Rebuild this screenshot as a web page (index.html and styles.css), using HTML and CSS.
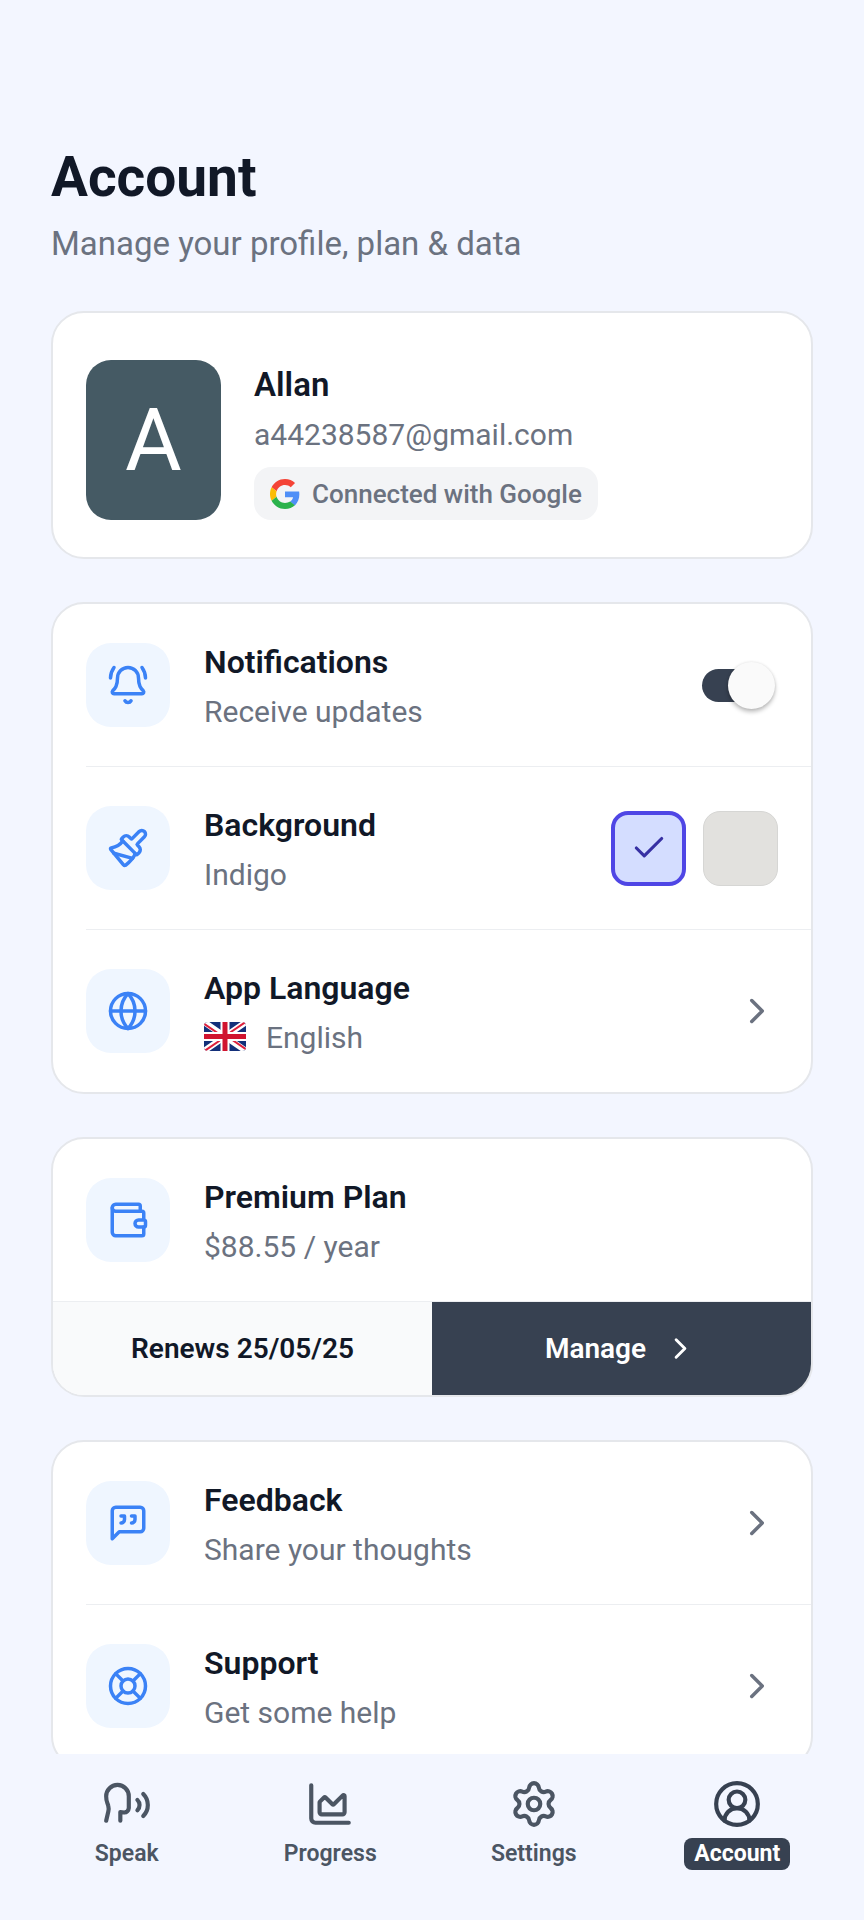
FILE: index.html
```html
<!DOCTYPE html>
<html lang="en">
<head>
<meta charset="utf-8">
<meta name="viewport" content="width=device-width, initial-scale=1">
<title>Account</title>
<link rel="stylesheet" href="styles.css">
</head>
<body>
<main class="screen">
  <header class="header">
    <h1 class="title">Account</h1>
    <p class="subtitle">Manage your profile, plan &amp; data</p>
  </header>

  <section class="card profile">
    <div class="avatar">A</div>
    <div class="profile-info">
      <h2 class="profile-name">Allan</h2>
      <p class="profile-email">a44238587@gmail.com</p>
      <p class="provider">
        <svg class="provider-logo" viewBox="0 0 48 48" aria-hidden="true">
          <path fill="#f44336" d="M24 9.5c3.54 0 6.71 1.22 9.21 3.6l6.85-6.85C35.9 2.38 30.47 0 24 0 14.62 0 6.51 5.38 2.56 13.22l7.98 6.19C12.43 13.72 17.74 9.5 24 9.5z"/>
          <path fill="#4f8ff7" d="M46.98 24.55c0-1.57-.15-3.09-.38-4.55H24v9.02h12.94c-.58 2.96-2.26 5.48-4.78 7.18l7.73 6c4.51-4.18 7.09-10.36 7.09-17.65z"/>
          <path fill="#fbbc05" d="M10.53 28.59c-.48-1.45-.76-2.99-.76-4.59s.27-3.14.76-4.59l-7.98-6.19C.92 16.46 0 20.12 0 24s.92 7.54 2.56 10.78l7.97-6.19z"/>
          <path fill="#2bb24c" d="M24 48c6.48 0 11.93-2.13 15.89-5.81l-7.73-6c-2.15 1.45-4.92 2.3-8.16 2.3-6.26 0-11.57-4.22-13.47-9.91l-7.98 6.19C6.51 42.62 14.62 48 24 48z"/>
        </svg>
        Connected with Google
      </p>
    </div>
  </section>

  <section class="card">
    <label class="row">
      <span class="tile">
        <svg class="icon" viewBox="0 0 24 24" aria-hidden="true"><path d="M10.268 21a2 2 0 0 0 3.464 0"/><path d="M22 8c0-2.3-.8-4.3-2-6"/><path d="M3.262 15.326A1 1 0 0 0 4 17h16a1 1 0 0 0 .74-1.673C19.41 13.956 18 12.499 18 8A6 6 0 0 0 6 8c0 4.499-1.411 5.956-2.738 7.326"/><path d="M4 2C2.8 3.7 2 5.7 2 8"/></svg>
      </span>
      <span class="row-text">
        <span class="row-title">Notifications</span>
        <span class="row-sub">Receive updates</span>
      </span>
      <input class="switch" type="checkbox" role="switch" checked>
    </label>
    <div class="row" role="radiogroup" aria-labelledby="bg-title">
      <span class="tile">
        <svg class="icon" viewBox="0 0 24 24" aria-hidden="true"><path d="m14.622 17.897-10.68-2.913"/><path d="M18.376 2.622a1 1 0 1 1 3.002 3.002L17.36 9.643a.5.5 0 0 0 0 .707l.944.944a2.41 2.41 0 0 1 0 3.408l-.944.944a.5.5 0 0 1-.707 0L8.354 7.348a.5.5 0 0 1 0-.707l.944-.944a2.41 2.41 0 0 1 3.408 0l.944.944a.5.5 0 0 0 .707 0z"/><path d="M9 8c-1.804 2.71-3.97 3.46-6.583 3.948a.507.507 0 0 0-.302.819l7.32 8.883a1 1 0 0 0 1.185.204C12.735 20.405 16 16.792 16 15"/></svg>
      </span>
      <span class="row-text">
        <span class="row-title" id="bg-title">Background</span>
        <span class="row-sub">Indigo</span>
      </span>
      <span class="swatches">
        <label class="swatch">
          <input class="swatch-input indigo" type="radio" name="background" aria-label="Indigo" checked>
          <svg class="swatch-check" viewBox="0 0 24 24" aria-hidden="true"><path d="M20 6 9 17l-5-5"/></svg>
        </label>
        <label class="swatch">
          <input class="swatch-input stone" type="radio" name="background" aria-label="Stone">
          <svg class="swatch-check" viewBox="0 0 24 24" aria-hidden="true"><path d="M20 6 9 17l-5-5"/></svg>
        </label>
      </span>
    </div>
    <a class="row" href="#language">
      <span class="tile">
        <svg class="icon" viewBox="0 0 24 24" aria-hidden="true"><circle cx="12" cy="12" r="10"/><path d="M12 2a14.5 14.5 0 0 0 0 20 14.5 14.5 0 0 0 0-20"/><path d="M2 12h20"/></svg>
      </span>
      <span class="row-text">
        <span class="row-title">App Language</span>
        <span class="row-sub language">
          <svg class="flag" viewBox="0 0 42 29" aria-hidden="true">
            <rect width="42" height="29" fill="#13307a"/>
            <path d="M0 0 42 29M42 0 0 29" stroke="#fff" stroke-width="6"/>
            <path d="M-1 1 21 16M43 28 21 13M43-1 21 14M-1 30 21 15" stroke="#dc1f3c" stroke-width="2"/>
            <path d="M21 0v29M0 14.500h42" stroke="#fff" stroke-width="9"/>
            <path d="M21 0v29M0 14.500h42" stroke="#d0142f" stroke-width="5"/>
          </svg>
          English
        </span>
      </span>
      <svg class="icon chevron" viewBox="0 0 24 24" aria-hidden="true"><path d="m9 18 6-6-6-6"/></svg>
    </a>
  </section>

  <section class="card">
    <div class="row">
      <span class="tile">
        <svg class="icon" viewBox="0 0 24 24" aria-hidden="true"><path d="M19 7V4a1 1 0 0 0-1-1H5a2 2 0 0 0 0 4h15a1 1 0 0 1 1 1v4h-3a2 2 0 0 0 0 4h3a1 1 0 0 0 1-1v-2a1 1 0 0 0-1-1"/><path d="M3 5v14a2 2 0 0 0 2 2h15a1 1 0 0 0 1-1v-4"/></svg>
      </span>
      <span class="row-text">
        <span class="row-title">Premium Plan</span>
        <span class="row-sub">$88.55 / year</span>
      </span>
    </div>
    <div class="plan-bar">
      <p class="renewal">Renews 25/05/25</p>
      <button class="manage" type="button">
        Manage
        <svg class="manage-chevron" viewBox="0 0 24 24" aria-hidden="true"><path d="m9 18 6-6-6-6"/></svg>
      </button>
    </div>
  </section>

  <section class="card">
    <a class="row" href="#feedback">
      <span class="tile">
        <svg class="icon" viewBox="0 0 24 24" aria-hidden="true"><path d="M21 15a2 2 0 0 1-2 2H7l-4 4V5a2 2 0 0 1 2-2h14a2 2 0 0 1 2 2z"/><path d="M8 12a2 2 0 0 0 2-2V8H8"/><path d="M14 12a2 2 0 0 0 2-2V8h-2"/></svg>
      </span>
      <span class="row-text">
        <span class="row-title">Feedback</span>
        <span class="row-sub">Share your thoughts</span>
      </span>
      <svg class="icon chevron" viewBox="0 0 24 24" aria-hidden="true"><path d="m9 18 6-6-6-6"/></svg>
    </a>
    <a class="row" href="#support">
      <span class="tile">
        <svg class="icon" viewBox="0 0 24 24" aria-hidden="true"><circle cx="12" cy="12" r="10"/><path d="m4.930 4.930 4.240 4.240M14.830 9.170l4.240-4.240M14.830 14.830l4.240 4.240M9.170 14.830l-4.240 4.240"/><circle cx="12" cy="12" r="4"/></svg>
      </span>
      <span class="row-text">
        <span class="row-title">Support</span>
        <span class="row-sub">Get some help</span>
      </span>
      <svg class="icon chevron" viewBox="0 0 24 24" aria-hidden="true"><path d="m9 18 6-6-6-6"/></svg>
    </a>
  </section>
</main>

<nav class="tabs">
  <a class="tab" href="#speak">
    <svg class="tab-icon" viewBox="0 0 24 24" aria-hidden="true"><path d="M8.800 20v-4.100l1.900.2a2.300 2.300 0 0 0 2.164-2.100V8.300A5.370 5.370 0 0 0 2 8.250c0 2.800.656 3.054 1 4.550a5.770 5.770 0 0 1 .029 2.758L2 20"/><path d="M19.800 17.800a7.500 7.500 0 0 0 .003-10.603"/><path d="M17 15a3.500 3.500 0 0 0-.025-4.975"/></svg>
    <span class="tab-label">Speak</span>
  </a>
  <a class="tab" href="#progress">
    <svg class="tab-icon" viewBox="0 0 24 24" aria-hidden="true"><path d="M3 3v16a2 2 0 0 0 2 2h16"/><path d="M7 11.207a.5.5 0 0 1 .146-.353l2-2a.5.5 0 0 1 .708 0l3.292 3.292a.5.5 0 0 0 .708 0l4.292-4.292a.5.5 0 0 1 .854.353V16a1 1 0 0 1-1 1H8a1 1 0 0 1-1-1z"/></svg>
    <span class="tab-label">Progress</span>
  </a>
  <a class="tab" href="#settings">
    <svg class="tab-icon" viewBox="0 0 24 24" aria-hidden="true"><path d="M9.671 4.136a2.340 2.340 0 0 1 4.659 0 2.340 2.340 0 0 0 3.319 1.915 2.340 2.340 0 0 1 2.330 4.033 2.340 2.340 0 0 0 0 3.831 2.340 2.340 0 0 1-2.330 4.033 2.340 2.340 0 0 0-3.319 1.915 2.340 2.340 0 0 1-4.659 0 2.340 2.340 0 0 0-3.320-1.915 2.340 2.340 0 0 1-2.330-4.033 2.340 2.340 0 0 0 0-3.831A2.340 2.340 0 0 1 6.350 6.051a2.340 2.340 0 0 0 3.319-1.915"/><circle cx="12" cy="12" r="3"/></svg>
    <span class="tab-label">Settings</span>
  </a>
  <a class="tab active" href="#account" aria-current="page">
    <svg class="tab-icon" viewBox="0 0 24 24" aria-hidden="true"><path d="M18 20a6 6 0 0 0-12 0"/><circle cx="12" cy="10" r="4"/><circle cx="12" cy="12" r="10"/></svg>
    <span class="tab-label">Account</span>
  </a>
</nav>
</body>
</html>
```

FILE: styles.css
```css
:root {
  --page: #f3f6ff;
  --ink: #111827;
  --muted: #6b7280;
  --slate: #374151;
  --line: #e5e7eb;
  --divider: #eceef1;
}

* {
  box-sizing: border-box;
}

body {
  margin: 0;
  height: 100vh;
  display: flex;
  flex-direction: column;
  background: var(--page);
  color: var(--ink);
  font-family: Roboto, "Noto Sans", sans-serif;
}

h1, h2, p {
  margin: 0;
}

a {
  color: inherit;
  text-decoration: none;
}

svg {
  display: block;
  flex: none;
}

.screen {
  flex: 1;
  min-height: 0;
  overflow-y: auto;
  scrollbar-width: none;
  display: flex;
  flex-direction: column;
  gap: 43px;
  padding: 145px 51px 43px;
}

.header {
  display: flex;
  flex-direction: column;
  gap: 14px;
  padding-bottom: 3px;
}

.title {
  font-size: 55px;
  line-height: 64px;
  font-weight: 700;
}

.subtitle {
  font-size: 33px;
  line-height: 42px;
  color: var(--muted);
}

.card {
  flex: none;
  background: #fff;
  border: 2px solid var(--line);
  border-radius: 33px;
  overflow: hidden;
}

/* Profile */

.profile {
  display: flex;
  gap: 33px;
  padding: 47px 33px 37px;
}

.avatar {
  flex: none;
  width: 135px;
  display: grid;
  place-items: center;
  border-radius: 25px;
  background: #455a64;
  color: #fff;
  font-size: 87px;
}

.profile-name {
  font-size: 33px;
  line-height: 49px;
  font-weight: 600;
}

.profile-email {
  font-size: 30px;
  line-height: 52px;
  color: var(--muted);
}

.provider {
  width: fit-content;
  height: 53px;
  margin-top: 6px;
  padding: 0 16px;
  display: flex;
  align-items: center;
  gap: 12px;
  border-radius: 17px;
  background: #f3f4f6;
  color: var(--muted);
  font-size: 26px;
  font-weight: 500;
}

.provider-logo {
  width: 30px;
  height: 30px;
}

/* Setting rows */

.row {
  display: flex;
  align-items: center;
  min-height: 162px;
  padding-right: 33px;
  margin-left: 33px;
}

.row + .row {
  border-top: 1px solid var(--divider);
  min-height: 163px;
}

.tile {
  flex: none;
  width: 84px;
  height: 84px;
  display: grid;
  place-items: center;
  border-radius: 25px;
  background: #eff6ff;
  color: #3b82f6;
}

.icon,
.tab-icon,
.manage-chevron,
.swatch-check {
  fill: none;
  stroke: currentColor;
  stroke-width: 2;
  stroke-linecap: round;
  stroke-linejoin: round;
}

.icon {
  width: 42px;
  height: 42px;
}

.chevron {
  color: var(--muted);
}

.row-text {
  flex: 1;
  display: flex;
  flex-direction: column;
  margin-left: 34px;
}

.row-title {
  font-size: 32px;
  line-height: 54px;
  font-weight: 600;
}

.row-sub {
  font-size: 30px;
  line-height: 46px;
  color: var(--muted);
}

.language {
  display: flex;
  align-items: center;
  gap: 20px;
}

.flag {
  width: 42px;
  height: 29px;
  margin-bottom: 4px;
  border-radius: 4px;
}

.switch {
  appearance: none;
  position: relative;
  flex: none;
  width: 69px;
  height: 33px;
  margin: 0 7px 0 0;
  border-radius: 17px;
  background: #9ca3af;
}

.switch::before {
  content: "";
  position: absolute;
  top: -7px;
  left: -4px;
  width: 47px;
  height: 47px;
  border-radius: 50%;
  background: #fafafa;
  box-shadow: 0 3px 4px rgba(0, 0, 0, 0.25), 0 0 3px rgba(0, 0, 0, 0.1);
}

.switch:checked {
  background: var(--slate);
}

.switch:checked::before {
  left: auto;
  right: -4px;
}

.swatches {
  display: flex;
  gap: 17px;
}

.swatch {
  display: grid;
  place-items: center;
}

.swatch > * {
  grid-area: 1 / 1;
}

.swatch-input {
  appearance: none;
  width: 75px;
  height: 75px;
  margin: 0;
  border: 1px solid #d6d6d4;
  border-radius: 17px;
}

.swatch-input:checked {
  border: 4px solid #4f46e5;
}

.indigo {
  background: #d4ddff;
}

.stone {
  background: #e2e1de;
}

.swatch-check {
  width: 38px;
  height: 38px;
  color: #3730a3;
  visibility: hidden;
}

.swatch-input:checked + .swatch-check {
  visibility: visible;
}

/* Plan */

.plan-bar {
  display: grid;
  grid-template-columns: 1fr 1fr;
  min-height: 94px;
  border-top: 1px solid var(--divider);
  background: #f9fafb;
  font-size: 28px;
  font-weight: 600;
}

.renewal {
  display: grid;
  place-items: center;
}

.manage {
  display: flex;
  align-items: center;
  justify-content: center;
  gap: 17px;
  padding: 0;
  border: 0;
  background: var(--slate);
  color: #fff;
  font: inherit;
}

.manage-chevron {
  width: 35px;
  height: 35px;
}

/* Bottom tabs */

.tabs {
  flex: none;
  display: grid;
  grid-template-columns: repeat(4, 1fr);
  padding: 25px 25px 50px;
  background: var(--page);
  color: #4b5563;
}

.tab {
  display: flex;
  flex-direction: column;
  align-items: center;
  gap: 9px;
}

.tab-icon {
  width: 50px;
  height: 50px;
}

.tab-label {
  padding: 0 10px;
  border-radius: 8px;
  font-size: 23px;
  line-height: 32px;
  font-weight: 600;
}

.active {
  color: var(--slate);
}

.active .tab-label {
  background: var(--slate);
  color: #fff;
  font-weight: 700;
}
```
